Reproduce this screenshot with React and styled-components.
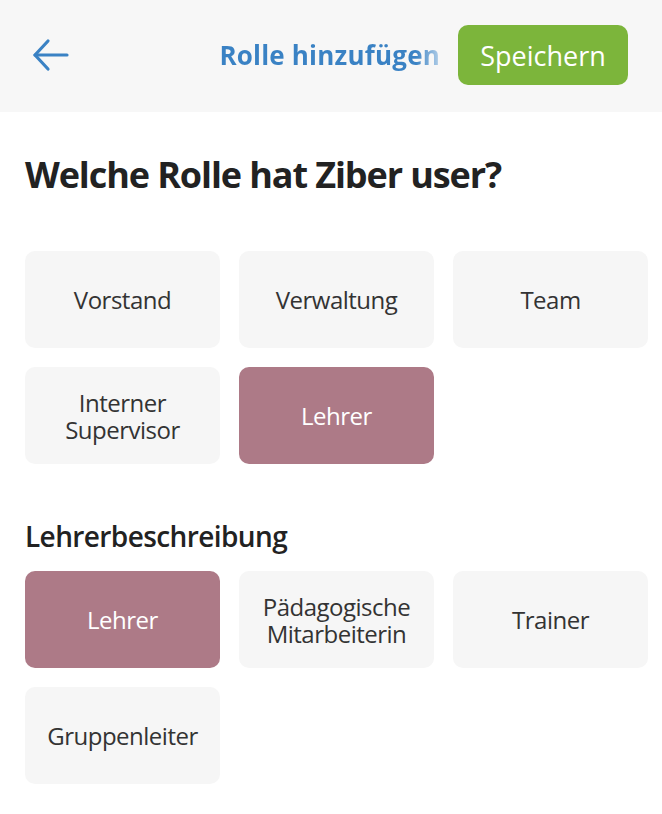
import styled, { createGlobalStyle } from 'styled-components';

const GlobalStyle = createGlobalStyle`
  body {
    margin: 0;
    background: #ffffff;
    font-family: "Open Sans", "Noto Sans", sans-serif;
  }
`;

const roles = ['Vorstand', 'Verwaltung', 'Team', 'Interner Supervisor', 'Lehrer'];
const descriptions = ['Lehrer', 'Pädagogische Mitarbeiterin', 'Trainer', 'Gruppenleiter'];

function BackArrow() {
  return (
    <svg width="38" height="34" viewBox="0 0 38 34" fill="none"
      stroke="#3a82c4" strokeWidth="3.2" strokeLinecap="round" strokeLinejoin="round">
      <path d="M35 17H3" />
      <path d="M16 3L3 17l13 14" />
    </svg>
  );
}

function ChoiceGrid({ items, selected }) {
  return (
    <Grid>
      {items.map(item => (
        <Tile key={item} $active={item === selected}>{item}</Tile>
      ))}
    </Grid>
  );
}

export default function App() {
  return (
    <Page>
      <GlobalStyle />
      <Header>
        <BackButton><BackArrow /></BackButton>
        <HeaderTitle>Rolle hinzufügen</HeaderTitle>
        <SaveButton>Speichern</SaveButton>
      </Header>
      <Content>
        <Question>Welche Rolle hat Ziber user?</Question>
        <ChoiceGrid items={roles} selected="Lehrer" />
        <SectionLabel>Lehrerbeschreibung</SectionLabel>
        <ChoiceGrid items={descriptions} selected="Lehrer" />
      </Content>
    </Page>
  );
}

const Page = styled.div`
  width: 662px;
  min-height: 814px;
  background: #fff;
`;

const Header = styled.header`
  height: 112px;
  background: #f7f7f7;
  display: flex;
  align-items: center;
  padding: 0 34px 2px 32px;
  box-sizing: border-box;
`;

const BackButton = styled.div`
  display: flex;
  align-items: center;
`;

const HeaderTitle = styled.div`
  margin-left: auto;
  margin-right: 18px;
  font-size: 26px;
  font-weight: 700;
  letter-spacing: 0.2px;
  color: #3a82c4;
  background: linear-gradient(90deg, #3a82c4 0%, #3a82c4 89%, #b3cfe8 100%);
  -webkit-background-clip: text;
  background-clip: text;
  -webkit-text-fill-color: transparent;
`;

const SaveButton = styled.button`
  height: 60px;
  width: 170px;
  border: none;
  border-radius: 10px;
  background: #7cb53b;
  color: #fff;
  font-family: "Open Sans", sans-serif;
  font-size: 27px;
  font-weight: 500;
  letter-spacing: 0;
`;

const Content = styled.main`
  padding: 0 14px 0 25px;
`;

const Question = styled.h1`
  margin: 40px 0 53px;
  font-size: 36px;
  line-height: 46px;
  font-weight: 700;
  letter-spacing: -1.1px;
  color: #222;
`;

const SectionLabel = styled.h2`
  margin: 54px 0 17px;
  font-size: 28px;
  line-height: 36px;
  font-weight: 550;
  letter-spacing: -0.6px;
  color: #222;
`;

const Grid = styled.div`
  display: grid;
  grid-template-columns: repeat(3, 195px);
  grid-auto-rows: 97px;
  gap: 19px;
`;

const Tile = styled.div`
  display: flex;
  align-items: center;
  justify-content: center;
  text-align: center;
  padding: 0 14px;
  border-radius: 10px;
  background: ${p => (p.$active ? '#ad7a87' : '#f6f6f6')};
  color: ${p => (p.$active ? '#fff' : '#333')};
  font-size: 24px;
  line-height: 27px;
  letter-spacing: -0.5px;
`;
